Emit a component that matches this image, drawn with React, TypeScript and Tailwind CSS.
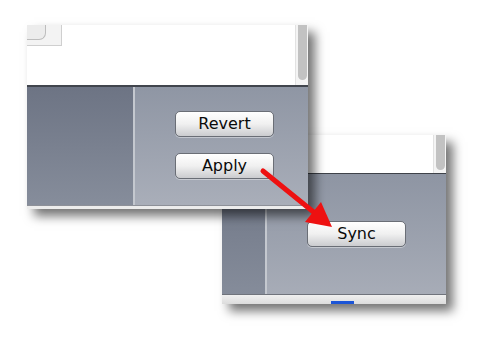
import React from "react";

function Button({ label }: { label: string }) {
  return (
    <div className="flex h-[26px] w-[99px] items-center justify-center rounded-[5px] border border-[#6a6e76] bg-gradient-to-b from-[#ffffff] via-[#f0f0f0] to-[#cbcccf] pb-[1px] text-[16px] leading-none text-[#0a0a0a] shadow-[0_1px_0_rgba(255,255,255,0.4)]">
      {label}
    </div>
  );
}

function Scroller({ thumbH }: { thumbH: string }) {
  return (
    <div className="flex w-[13px] justify-center border-l border-[#e2e2e2] bg-[#f4f4f4]">
      <div className={`w-[9px] rounded-b-[5px] bg-[#c2c2c2] ${thumbH}`} />
    </div>
  );
}

export default function App() {
  return (
    <div
      className="relative h-[349px] w-[482px] overflow-hidden bg-white"
      style={{ fontFamily: '"DejaVu Sans", "Liberation Sans", sans-serif' }}
    >
      {/* back window */}
      <div className="absolute left-[222px] top-[135px] flex h-[169px] w-[224px] flex-col shadow-[7px_7px_10px_rgba(0,0,0,0.55)]">
        <div className="flex h-[38px] bg-white">
          <div className="flex-1" />
          <Scroller thumbH="h-[35px]" />
        </div>
        <div className="flex flex-1 border-t border-[#3e4249]">
          <div className="w-[43px] bg-gradient-to-b from-[#6f7686] to-[#858c9a]" />
          <div className="w-[2px] bg-[#c4c8cf]" />
          <div className="flex flex-1 justify-center bg-gradient-to-b from-[#8e95a3] to-[#a7acb7] pt-[47px]">
            <Button label="Sync" />
          </div>
        </div>
        <div className="flex h-[10px] items-end border-t border-[#70747c] bg-gradient-to-b from-[#f0f0f0] to-[#dcdcdc] pl-[109px]">
          <div className="h-[3px] w-[23px] bg-[#1c55d6]" />
        </div>
      </div>

      {/* front window */}
      <div className="absolute left-[27px] top-[25px] flex h-[184px] w-[281px] flex-col shadow-[7px_7px_10px_rgba(0,0,0,0.55)]">
        <div className="flex h-[60px] bg-white">
          <div className="flex-1">
            <div className="h-[21px] w-[35px] border-b border-r border-[#cfcfcf] bg-[#f3f3f3]">
              <div className="h-[15px] w-[19px] rounded-br-[7px] border-b border-r border-[#bdbdbd] bg-[#ececec]" />
            </div>
          </div>
          <Scroller thumbH="h-[55px]" />
        </div>
        <div className="flex flex-1 border-t-2 border-[#41454d]">
          <div className="w-[106px] bg-gradient-to-b from-[#6d7484] to-[#868d9b]" />
          <div className="w-[2px] bg-[#c4c8cf]" />
          <div className="flex flex-1 flex-col items-center gap-[16px] bg-gradient-to-b from-[#8f96a4] to-[#a9aeb9] pt-[24px] pl-[6px]">
            <Button label="Revert" />
            <Button label="Apply" />
          </div>
        </div>
        <div className="h-[4px] border-t border-[#8d9098] bg-[#ececec]" />
      </div>

      {/* arrow */}
      <svg className="absolute left-0 top-0" width="482" height="349" viewBox="0 0 482 349">
        <line x1="263" y1="171" x2="316" y2="214" stroke="#ee1111" strokeWidth="5" strokeLinecap="round" />
        <polygon points="332,227 305,222 321,202" fill="#ee1111" />
      </svg>
    </div>
  );
}
